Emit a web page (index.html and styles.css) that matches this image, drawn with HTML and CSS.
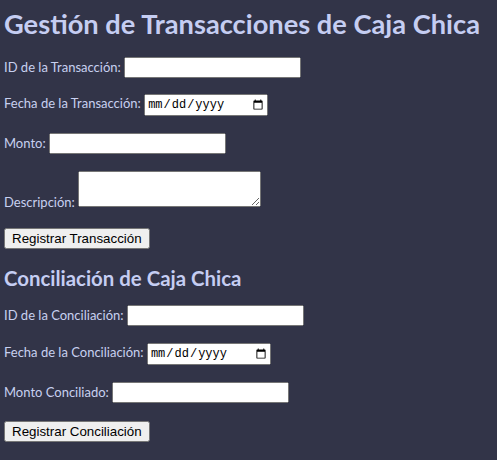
FILE: index.html
```html
<!DOCTYPE html>
<html lang="es">
<head>
<meta charset="utf-8">
<title>Caja Chica</title>
<link rel="stylesheet" href="styles.css">
</head>
<body>
<h1 class="title">Gestión de Transacciones de Caja Chica</h1>
<form class="form">
  <div class="row row-tight"><label for="idt">ID de la Transacción:</label> <input class="field" type="text" id="idt"></div>
  <div class="row"><label for="ft">Fecha de la Transacción:</label> <input class="date" type="date" id="ft"></div>
  <div class="row"><label for="mt">Monto:</label> <input class="field" type="text" id="mt"></div>
  <div class="row row-loose"><label for="dt">Descripción:</label> <textarea class="area" id="dt"></textarea></div>
  <div class="row"><button class="btn" type="button">Registrar Transacción</button></div>
</form>
<h2 class="subtitle">Conciliación de Caja Chica</h2>
<form class="form">
  <div class="row"><label for="idc">ID de la Conciliación:</label> <input class="field" type="text" id="idc"></div>
  <div class="row"><label for="fc">Fecha de la Conciliación:</label> <input class="date" type="date" id="fc"></div>
  <div class="row row-loose"><label for="mc">Monto Conciliado:</label> <input class="field" type="text" id="mc"></div>
  <div class="row"><button class="btn" type="button">Registrar Conciliación</button></div>
</form>
</body>
</html>
```
FILE: styles.css
```css
html {
  background: #323448;
}
body {
  margin: 4px;
  font-family: Lato, "Noto Sans", sans-serif;
  font-size: 13px;
  color: #c8d0f0;
}
.title {
  font-size: 27.25px;
  font-weight: bold;
  margin: 3px 0 17px;
  color: #c5cdf2;
}
.subtitle {
  font-size: 20.4px;
  font-weight: bold;
  margin: 17px 0 15px;
  color: #c5cdf2;
}
.form {
  margin: 0;
}
.row {
  margin-bottom: 17px;
}
.row-tight {
  margin-bottom: 16px;
}
.row-loose {
  margin-bottom: 18px;
}
.form .row:last-child {
  margin-bottom: 0;
}
.field {
  box-sizing: border-box;
  width: 177px;
  height: 21px;
  font-family: "Liberation Sans", Arial, sans-serif;
  font-size: 13.33px;
}
.date {
  box-sizing: border-box;
  width: 124px;
  height: 22px;
  font-family: "Liberation Mono", monospace;
  font-size: 12px;
}
.area {
  box-sizing: border-box;
  width: 183px;
  height: 36px;
  font-family: "Liberation Mono", monospace;
  font-size: 13.33px;
}
.btn {
  font-family: "Liberation Sans", Arial, sans-serif;
  font-size: 13.33px;
}
```
